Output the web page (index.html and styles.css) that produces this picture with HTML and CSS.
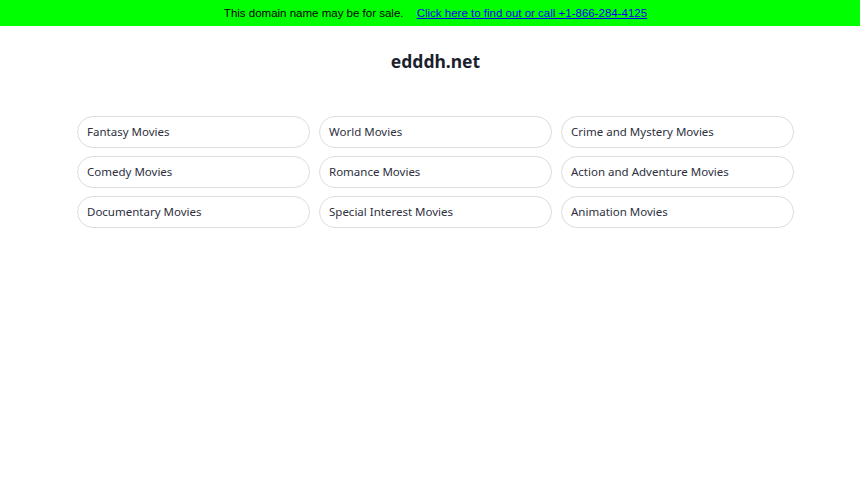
FILE: index.html
```html
<!DOCTYPE html>
<html lang="en">
<head>
  <meta charset="UTF-8">
  <meta name="viewport" content="width=device-width, initial-scale=1.0">
  <link rel="stylesheet" href="styles.css">
  <title>edddh.net</title>
</head>
<body>
  <div class="sale-bar">
    This domain name may be for sale.
    <a href="#">Click here to find out or call +1-866-284-4125</a>
  </div>

  <div class="container">
    <h1>edddh.net</h1>
    <div class="links">
      <a class="link" href="#">Fantasy Movies</a>
      <a class="link" href="#">World Movies</a>
      <a class="link" href="#">Crime and Mystery Movies</a>
      <a class="link" href="#">Comedy Movies</a>
      <a class="link" href="#">Romance Movies</a>
      <a class="link" href="#">Action and Adventure Movies</a>
      <a class="link" href="#">Documentary Movies</a>
      <a class="link" href="#">Special Interest Movies</a>
      <a class="link" href="#">Animation Movies</a>
    </div>
  </div>
</body>
</html>
```

FILE: styles.css
```css
body {
  margin: 0;
  padding: 0;
  background-color: #fff;
  font-family: 'Noto Sans', 'Open Sans', sans-serif;
}

.sale-bar {
  height: 26px;
  line-height: 26px;
  padding-left: 11px;
  background-color: #00ff00;
  text-align: center;
  font-family: 'Liberation Sans', Arial, sans-serif;
  font-size: 11.5px;
  color: #000;
}

.sale-bar a {
  margin-left: 10px;
  color: #0000ee;
  text-decoration: underline;
}

.container {
  width: 717px;
  margin: 0 0 0 77px;
}

h1 {
  margin: 24px 0 0;
  height: 22px;
  line-height: 22px;
  text-align: center;
  font-size: 17.5px;
  font-weight: 700;
  color: #1c1f2e;
}

.links {
  display: grid;
  grid-template-columns: repeat(3, 1fr);
  gap: 8px 9px;
  margin-top: 44px;
}

.link {
  display: block;
  height: 30px;
  line-height: 30px;
  padding: 0 9px;
  border: 1px solid #ddd;
  border-radius: 16px;
  font-size: 11.5px;
  color: #2d3040;
  text-decoration: none;
}
```
